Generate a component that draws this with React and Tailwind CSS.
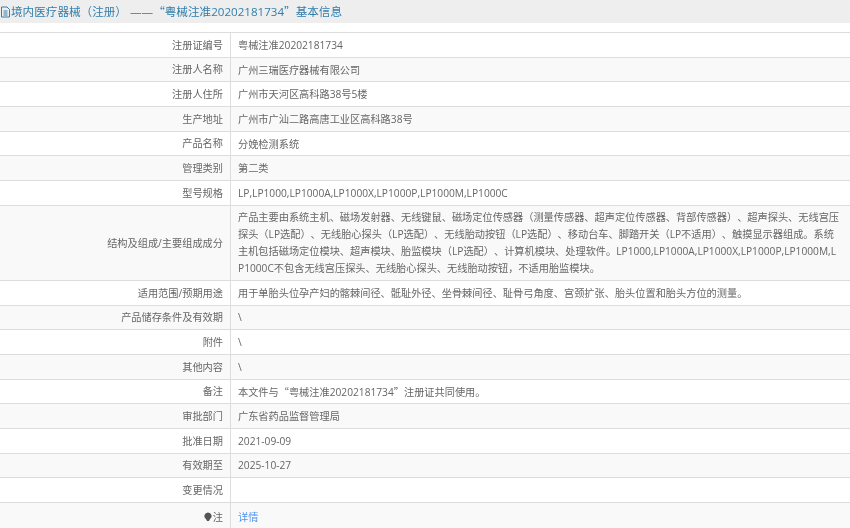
const Quote = ({ children }) => <span className="font-['Noto_Sans_CJK_SC']">{children}</span>;

const rows = [
  ['注册证编号', '粤械注准20202181734'],
  ['注册人名称', '广州三瑞医疗器械有限公司'],
  ['注册人住所', '广州市天河区高科路38号5楼'],
  ['生产地址', '广州市广汕二路高唐工业区高科路38号'],
  ['产品名称', '分娩检测系统'],
  ['管理类别', '第二类'],
  ['型号规格', 'LP,LP1000,LP1000A,LP1000X,LP1000P,LP1000M,LP1000C'],
  ['结构及组成/主要组成成分', '产品主要由系统主机、磁场发射器、无线键鼠、磁场定位传感器（测量传感器、超声定位传感器、背部传感器）、超声探头、无线宫压探头（LP选配）、无线胎心探头（LP选配）、无线胎动按钮（LP选配）、移动台车、脚踏开关（LP不适用）、触摸显示器组成。系统主机包括磁场定位模块、超声模块、胎监模块（LP选配）、计算机模块、处理软件。LP1000,LP1000A,LP1000X,LP1000P,LP1000M,LP1000C不包含无线宫压探头、无线胎心探头、无线胎动按钮，不适用胎监模块。'],
  ['适用范围/预期用途', '用于单胎头位孕产妇的髂棘间径、骶耻外径、坐骨棘间径、耻骨弓角度、宫颈扩张、胎头位置和胎头方位的测量。'],
  ['产品储存条件及有效期', '\\'],
  ['附件', '\\'],
  ['其他内容', '\\'],
  ['备注', <>本文件与<Quote>“</Quote>粤械注准20202181734<Quote>”</Quote>注册证共同使用。</>],
  ['审批部门', '广东省药品监督管理局'],
  ['批准日期', '2021-09-09'],
  ['有效期至', '2025-10-27'],
  ['变更情况', ''],
];

const font = { fontFamily: '"Open Sans", "Noto Sans CJK SC", sans-serif' };

const Row = ({ label, value, striped, height = 'h-[24.7px]' }) => (
  <div className={`flex border-t border-[#dddddd] ${height} ${striped ? 'bg-[#f9f9f9]' : 'bg-white'}`}>
    <div className="w-[231px] shrink-0 flex items-center justify-end pt-[1px] pr-[7px] border-r border-[#dddddd]">{label}</div>
    <div className="flex-1 pt-[1px] flex items-center pl-[7px] pr-[10px] break-all leading-[17px]">
      <div>{value}</div>
    </div>
  </div>
);

const App = () => {
  return (
    <div lang="zh-CN" style={font} className="w-[850px] h-[528px] overflow-hidden bg-white text-[10.2px] text-[#666666] blur-[0.3px] [text-spacing-trim:space-all]">
      <div className="h-[23px] bg-[#eeeeee] flex items-center text-[11.6px] text-[#317eac]">
        <svg width="11" height="12" viewBox="0 0 11 12" fill="none" stroke="currentColor" strokeWidth="1" className="shrink-0">
          <path d="M1.5 1h5.5l2.5 2.5v7.5h-8z" />
          <path d="M3.5 5h4M3.5 7h4M3.5 9h4" />
        </svg>
        <span>境内医疗器械（注册） ——<Quote>“</Quote>粤械注准20202181734<Quote>”</Quote>基本信息</span>
      </div>
      <div className="mt-[9px]">
        {rows.map((row, i) => (
          <Row key={row[0]} label={row[0]} value={row[1]} striped={i % 2 === 1} height={i === 7 ? 'h-[75px]' : undefined} />
        ))}
        <Row
          striped
          height="h-[29px]"
          label={
            <span className="flex items-center gap-[1px]">
              <svg width="8" height="10" viewBox="0 0 8 10" fill="#555555">
                <path d="M4 0.5a3.6 3.6 0 0 1 2 6.6l-1 2h-2l-1-2a3.6 3.6 0 0 1 2-6.6z" />
              </svg>
              注
            </span>
          }
          value={<span className="text-[#4d94ee]">详情</span>}
        />
      </div>
    </div>
  );
};

export default App;
